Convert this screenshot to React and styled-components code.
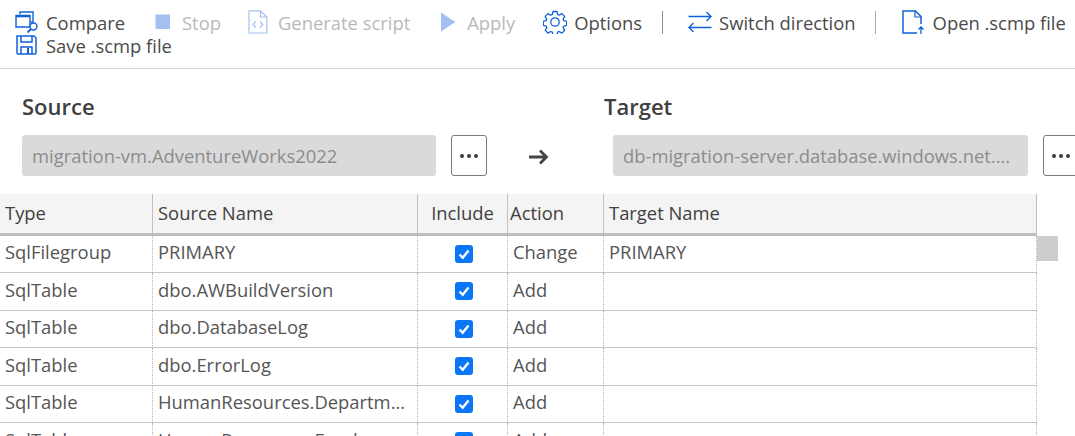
import React from 'react';
import styled, { createGlobalStyle } from 'styled-components';

const Global = createGlobalStyle`
  html, body { margin: 0; padding: 0; background: #fff; overflow: hidden; }
  body { width: 1075px; height: 436px; font-family: "Open Sans", "Noto Sans", sans-serif; color: #4a4a4a; }
`;

const Page = styled.div`width: 1075px; height: 436px; overflow: hidden; display: flex; flex-direction: column;`;
const Toolbar = styled.div`
  display: flex; flex-wrap: wrap; align-content: flex-start; height: 57px; padding: 11px 0 0 15px;
  border-bottom: 1px solid #d4d4d4; box-sizing: content-box; flex: none; width: 1060px;
`;
const Tool = styled.div`
  display: flex; align-items: center; height: 22px; white-space: nowrap; font-size: 18.4px; margin-bottom: -2px;
  margin-right: ${p => p.$mr ?? 0}px; color: ${p => (p.$disabled ? '#b9b9b9' : '#4a4a4a')};
`;
const IconSlot = styled.span`
  width: 23px; height: 22px; margin-right: 8px; display: flex; align-items: center; justify-content: center; flex: none;
  svg { display: block; flex: none; }
`;
const Sep = styled.div`width: 1px; height: 23px; background: ${p => p.$c}; margin-right: ${p => p.$mr}px;`;

const Selectors = styled.div`display: flex; flex: none; padding-top: 23px; height: 102px; box-sizing: content-box;`;
const Side = styled.div`display: flex; flex-direction: column; flex: none;`;
const Title = styled.div`font-weight: 600; font-size: 22px; line-height: 28px; color: #404040; margin-left: ${p => p.$ml}px; height: 43px;`;
const FieldRow = styled.div`display: flex; align-items: flex-start; padding-left: ${p => p.$pl}px;`;
const Field = styled.div`
  width: ${p => p.$w}px; height: 41px; background: #dadada; border-radius: 3px; color: #8c8c8c; font-size: 18.4px;
  line-height: 41px; padding-left: 10px; box-sizing: border-box; white-space: nowrap; overflow: hidden;
`;
const MoreBtn = styled.div`
  width: 36px; height: 41px; margin-left: 15px; border: 1px solid #7a7a7a; border-radius: 3px; box-sizing: border-box; background: #fff; flex: none;
  display: flex; align-items: center; justify-content: center; gap: 3px;
`;
const Dot = styled.i`width: 4px; height: 4px; border-radius: 50%; background: #3c3c3c; display: block;`;
const ArrowWrap = styled.div`width: 104px; flex: none; padding: 56px 0 0 42px; box-sizing: border-box;`;

const GridWrap = styled.div`display: flex; align-items: flex-start; flex: none;`;
const Table = styled.table`
  border-collapse: separate; border-spacing: 0; table-layout: fixed; width: 1037px; flex: none; font-size: 18.4px;
`;
const Th = styled.th`
  height: 41.500px; box-sizing: border-box; background: #f4f4f4; font-weight: 400; text-align: ${p => p.$center ? 'center' : 'left'}; color: #404040;
  padding: 0 5px 1px ${p => p.$pl ?? 5}px; border-right: 1px solid #c0c0c0; border-bottom: 3px solid #bebebe;
`;
const Td = styled.td`
  height: 37.500px; box-sizing: border-box; padding: 0 2px 4px 5px; color: #555; border-bottom: 1px solid #c6c6c6; border-right: 1px dotted #b4b4b4;
  white-space: nowrap; overflow: hidden; text-overflow: ellipsis; text-align: ${p => p.$center ? 'center' : 'left'};
`;
const Check = styled.span`
  display: inline-flex; width: 18px; height: 18px; background: #0b76f7; border-radius: 3px; align-items: center; justify-content: center; vertical-align: middle; margin-top: -1px;
`;
const Track = styled.div`width: 21px; flex: none; padding-top: 42px;`;
const Thumb = styled.div`width: 21px; height: 25px; background: #cdcdcd;`;

const B = '#0f62d8';
const L = '#a3c1f0';

const CompareIcon = () => (
  <svg width="24" height="24" viewBox="0 0 24 24" fill="none" stroke={B} strokeWidth="1.400">
    <path d="M5 4.500V2h13v10h-2" />
    <path d="M1 5.500h14V17H1z" fill="#fff" />
    <path d="M1 6.200h14" strokeWidth="2.200" />
    <circle cx="18.500" cy="16.500" r="3.500" fill="#fff" />
    <path d="M16 19l-3.500 3.500" strokeWidth="1.800" />
  </svg>
);
const SaveIcon = () => (
  <svg width="21" height="20" viewBox="0 0 21 20" fill="none" stroke={B} strokeWidth="1.500">
    <path d="M1 1h17l2 2v15a1 1 0 0 1-1 1H2a1 1 0 0 1-1-1z" />
    <path d="M5 1v6h11V1M5 19v-7h11v7" />
    <path d="M12 13v6" strokeWidth="2" />
  </svg>
);
const StopIcon = () => <svg width="16" height="16"><rect x="0.500" y="0.500" width="14.500" height="14.500" fill={L} /></svg>;
const ScriptIcon = () => (
  <svg width="20" height="24" viewBox="0 0 20 24" fill="none" stroke={L} strokeWidth="1.200">
    <path d="M1 .8h11.500L18.800 7v16H1z" />
    <path d="M12.500 .8V7h6.300" />
    <path d="M7.800 11.500L5 14.500l2.800 3M12 11.500l2.800 3-2.800 3" />
  </svg>
);
const PlayIcon = () => <svg width="16" height="20"><path d="M1 .5L15.500 10 1 19.500z" fill={L} /></svg>;
const GearIcon = () => (
  <svg width="24" height="24" viewBox="0 0 24 24" fill="none" stroke={B} strokeWidth="1.300" strokeLinejoin="round">
    <path d="M10 1.500h4l.7 3 1.500.7 2.700-1.600 2.800 2.800-1.600 2.700.7 1.600 2.900.7v4l-2.900.7-.7 1.500 1.600 2.700-2.800 2.800-2.700-1.600-1.500.7-.7 2.800h-4l-.7-2.800-1.600-.7-2.700 1.600-2.800-2.800 1.600-2.700-.7-1.500-2.800-.7v-4l2.800-.7.7-1.600-1.600-2.700 2.800-2.800 2.700 1.600 1.600-.7z" />
    <circle cx="12" cy="12" r="4.200" />
  </svg>
);
const SwitchIcon = () => (
  <svg width="24" height="20" viewBox="0 0 24 20" fill="none" stroke={B} strokeWidth="1.400">
    <path d="M.5 4.500h22.500M18.500 0l4.500 4.500-4.500 4.500" />
    <path d="M23.500 15.500H1M5.500 11L1 15.500 5.500 20" />
  </svg>
);
const OpenIcon = () => (
  <svg width="23" height="24" viewBox="0 0 23 24" fill="none" stroke={B} strokeWidth="1.500">
    <path d="M15 23H1V1h12.500L19 6.500V14" />
    <path d="M13 1v6h6" strokeWidth="1.200" />
    <path d="M19 24v-7M16.500 19.500L19 17l2.500 2.500" strokeWidth="1.300" />
  </svg>
);
const ArrowIcon = () => (
  <svg width="20" height="16" viewBox="0 0 20 16" fill="none" stroke="#444" strokeWidth="2.800">
    <path d="M0 8h17M11 1.500L17.500 8 11 14.500" />
  </svg>
);
const CheckMark = () => (
  <svg width="12" height="12" viewBox="0 0 12 12" fill="none" stroke="#fff" strokeWidth="2.400"><path d="M1.500 6.500L4.700 9.800 10.500 2.500" /></svg>
);

const rows = [
  ['SqlFilegroup', 'PRIMARY', 'Change', 'PRIMARY'],
  ['SqlTable', 'dbo.AWBuildVersion', 'Add', ''],
  ['SqlTable', 'dbo.DatabaseLog', 'Add', ''],
  ['SqlTable', 'dbo.ErrorLog', 'Add', ''],
  ['SqlTable', 'HumanResources.Department', 'Add', ''],
  ['SqlTable', 'HumanResources.Employee', 'Add', ''],
];

const tools = [
  { label: 'Compare', icon: <CompareIcon />, mr: 26 },
  { label: 'Stop', icon: <StopIcon />, disabled: true, mr: 26 },
  { label: 'Generate script', icon: <ScriptIcon />, disabled: true, mr: 26 },
  { label: 'Apply', icon: <PlayIcon />, disabled: true, mr: 28 },
  { label: 'Options', icon: <GearIcon />, mr: 20 },
];

export default function App() {
  return (
    <Page>
      <Global />
      <Toolbar>
        {tools.map(t => (
          <Tool key={t.label} $disabled={t.disabled} $mr={t.mr}>
            <IconSlot>{t.icon}</IconSlot>{t.label}
          </Tool>
        ))}
        <Sep $c="#8f8f8f" $mr={25} />
        <Tool $mr={19}><IconSlot><SwitchIcon /></IconSlot>Switch direction</Tool>
        <Sep $c="#a8a8a8" $mr={26} />
        <Tool><IconSlot><OpenIcon /></IconSlot>Open .scmp file</Tool>
        <Tool $mr={800}><IconSlot><SaveIcon /></IconSlot>Save .scmp file</Tool>
      </Toolbar>
      <Selectors>
        <Side>
          <Title $ml={22}>Source</Title>
          <FieldRow $pl={22}><Field $w={414}>migration-vm.AdventureWorks2022</Field><MoreBtn><Dot /><Dot /><Dot /></MoreBtn></FieldRow>
        </Side>
        <ArrowWrap><ArrowIcon /></ArrowWrap>
        <Side>
          <Title $ml={13}>Target</Title>
          <FieldRow $pl={22}><Field $w={415}>db-migration-server.database.windows.net....</Field><MoreBtn><Dot /><Dot /><Dot /></MoreBtn></FieldRow>
        </Side>
      </Selectors>
      <GridWrap>
        <Table>
          <colgroup>
            <col style={{ width: 153 }} /><col style={{ width: 265 }} /><col style={{ width: 90 }} /><col style={{ width: 96 }} /><col style={{ width: 433 }} />
          </colgroup>
          <thead>
            <tr><Th>Type</Th><Th>Source Name</Th><Th $center>Include</Th><Th $pl={2}>Action</Th><Th>Target Name</Th></tr>
          </thead>
          <tbody>
            {rows.map((r, i) => (
              <tr key={i}>
                <Td>{r[0]}</Td><Td>{r[1]}</Td>
                <Td $center><Check><CheckMark /></Check></Td>
                <Td>{r[2]}</Td><Td>{r[3]}</Td>
              </tr>
            ))}
          </tbody>
        </Table>
        <Track><Thumb /></Track>
      </GridWrap>
    </Page>
  );
}
